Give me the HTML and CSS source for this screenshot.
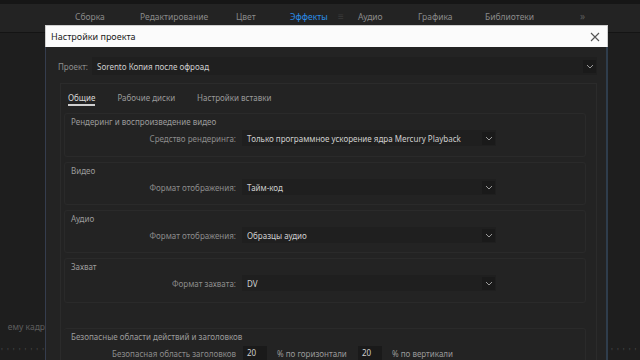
FILE: index.html
```html
<!DOCTYPE html>
<html lang="ru">
<head>
<meta charset="utf-8">
<link rel="stylesheet" href="styles.css">
</head>
<body>
<div class="app">
  <header class="topbar">
    <nav class="ws-tabs">
      <span class="ws">Сборка</span>
      <span class="ws">Редактирование</span>
      <span class="ws">Цвет</span>
      <span class="ws active">Эффекты</span>
      <span class="ws menu">≡</span>
      <span class="ws">Аудио</span>
      <span class="ws">Графика</span>
      <span class="ws">Библиотеки</span>
      <span class="ws more">»</span>
    </nav>
  </header>
  <main class="workspace">
    <div class="bg-left">
      <span class="bg-text">ему кадр</span>
      <span class="bg-ticks">' ' ' ' ' ' ' '</span>
    </div>
    <div class="bg-right">
      <span class="bg-ticks">' ' ' ' '</span>
    </div>
  </main>

  <section class="dialog">
    <div class="titlebar">
      <span class="title">Настройки проекта</span>
      <svg class="close" width="10" height="10" viewBox="0 0 10 10"><path d="M1 1L9 9M9 1L1 9" stroke="#555" stroke-width="1.1"/></svg>
    </div>
    <div class="dialog-body">
      <div class="project-row">
        <span class="lbl">Проект:</span>
        <div class="select wide"><span>Sorento Копия после офроад</span><span class="chev"><svg width="8" height="5" viewBox="0 0 8 5"><path d="M1 1L4 4L7 1" stroke="#9a9a9a" fill="none" stroke-width="1"/></svg></span></div>
      </div>
      <div class="panel">
        <div class="tabs">
          <span class="tab on">Общие</span>
          <span class="tab">Рабочие диски</span>
          <span class="tab">Настройки вставки</span>
        </div>
        <div class="group g1">
          <div class="gtitle">Рендеринг и воспроизведение видео</div>
          <div class="row">
            <span class="rlbl">Средство рендеринга:</span>
            <div class="select"><span>Только программное ускорение ядра Mercury Playback</span><span class="chev"><svg width="8" height="5" viewBox="0 0 8 5"><path d="M1 1L4 4L7 1" stroke="#9a9a9a" fill="none" stroke-width="1"/></svg></span></div>
          </div>
        </div>
        <div class="group">
          <div class="gtitle">Видео</div>
          <div class="row">
            <span class="rlbl">Формат отображения:</span>
            <div class="select"><span>Тайм-код</span><span class="chev"><svg width="8" height="5" viewBox="0 0 8 5"><path d="M1 1L4 4L7 1" stroke="#9a9a9a" fill="none" stroke-width="1"/></svg></span></div>
          </div>
        </div>
        <div class="group">
          <div class="gtitle">Аудио</div>
          <div class="row">
            <span class="rlbl">Формат отображения:</span>
            <div class="select"><span>Образцы аудио</span><span class="chev"><svg width="8" height="5" viewBox="0 0 8 5"><path d="M1 1L4 4L7 1" stroke="#9a9a9a" fill="none" stroke-width="1"/></svg></span></div>
          </div>
        </div>
        <div class="group g4">
          <div class="gtitle">Захват</div>
          <div class="row">
            <span class="rlbl">Формат захвата:</span>
            <div class="select"><span>DV</span><span class="chev"><svg width="8" height="5" viewBox="0 0 8 5"><path d="M1 1L4 4L7 1" stroke="#9a9a9a" fill="none" stroke-width="1"/></svg></span></div>
          </div>
        </div>
        <div class="group g5">
          <div class="gtitle">Безопасные области действий и заголовков</div>
          <div class="row">
            <span class="rlbl">Безопасная область заголовков</span>
            <span class="num">20</span>
            <span class="unit">% по горизонтали</span>
            <span class="num">20</span>
            <span class="unit">% по вертикали</span>
          </div>
        </div>
      </div>
    </div>
  </section>
</div>
</body>
</html>
```

FILE: styles.css
```css
* { box-sizing: border-box; margin: 0; padding: 0; }
html, body { width: 640px; height: 360px; overflow: hidden; background: #1d1d1d; }
body { font-family: "Noto Sans", "Open Sans", sans-serif; font-size: 8px; color: #9b9b9b; }
.app { position: relative; width: 640px; height: 360px; display: flex; flex-direction: column; }

.topbar { height: 33px; flex-shrink: 0; background: #232323; border-top: 4px solid #161616; border-bottom: 1px solid #141414; }
.ws-tabs { display: flex; align-items: center; height: 24px; padding-left: 75px; }
.ws { color: #8a8a8a; font-size: 8.5px; }
.ws:nth-child(1) { width: 65px; }
.ws:nth-child(2) { width: 96px; }
.ws:nth-child(3) { width: 54px; }
.ws:nth-child(4) { width: 48px; }
.ws.active { color: #2b8ee8; }
.ws.menu { width: 20px; color: #3a3a3a; font-size: 10px; }
.ws:nth-child(6) { width: 60px; }
.ws:nth-child(7) { width: 67px; }
.ws:nth-child(8) { width: 95px; }
.ws.more { color: #5a5a5a; font-size: 10px; }

.workspace { flex: 1; display: flex; justify-content: space-between; background: #1e1e1e; }
.bg-left { width: 45px; display: flex; flex-direction: column; justify-content: flex-end; align-items: flex-end; padding-bottom: 3px; gap: 14px; overflow: hidden; }
.bg-text { white-space: nowrap; color: #5e5e5e; font-size: 8.5px; }
.bg-ticks { color: #4a4a4a; font-size: 8px; white-space: nowrap; letter-spacing: 1px; }
.bg-right { width: 33px; display: flex; align-items: flex-end; padding-bottom: 3px; padding-left: 4px; }

.dialog { position: absolute; left: 45px; top: 25px; width: 563px; height: 335px; display: flex; flex-direction: column; }
.titlebar { height: 22px; flex-shrink: 0; background: #fbfbfb; display: flex; align-items: center; justify-content: space-between; padding: 0 6px 0 5px; border: 1px solid #cfcfcf; border-bottom: none; }
.title { color: #1a1a1a; font-size: 9px; }
.close { margin-right: 1px; }
.dialog-body { flex: 1; min-height: 0; overflow: hidden; background: #232323; border-left: 1px solid #353d4e; border-right: 2px solid #2f3d4c; padding: 10px 9px 0 12px; }

.project-row { display: flex; align-items: center; height: 18px; }
.lbl { width: 34px; color: #8e8e8e; }
.select { display: flex; align-items: center; justify-content: space-between; background: #1f1f1f; height: 16px; padding-left: 5px; color: #cfcfcf; }
.select.wide { flex: 1; height: 18px; }
.chev { display: flex; align-items: center; justify-content: center; width: 13px; height: 13px; background: #1a1a1a; margin-right: 1px; }

.panel { margin: 8px 0 0 2px; width: 537px; border: 1px solid #2b2b2b; border-bottom: none; height: 300px; padding: 0 10px 0 3px; }
.tabs { display: flex; height: 25px; align-items: center; padding-left: 4px; padding-top: 2px; }
.tab { color: #9a9a9a; margin-right: 22px; padding-bottom: 1px; border-bottom: 2px solid transparent; line-height: 10px; position: relative; top: 2px; }
.tab.on { color: #d8d8d8; border-bottom-color: #cfcfcf; }

.group { border: 1px solid #2a2a2a; border-radius: 3px; height: 43px; margin-bottom: 5px; padding: 2px 0 0 6px; }
.g1 { margin-top: 4px; height: 44px; }
.g4 { height: 45px; margin-bottom: 25px; }
.g5 { height: 40px; border-bottom: none; border-left: none; padding-left: 7px; }
.gtitle { color: #9c9c9c; height: 14px; line-height: 12px; }
.row { display: flex; align-items: center; height: 16px; }
.rlbl { width: 171px; text-align: right; color: #8c8c8c; padding-right: 6px; }
.row .select { width: 254px; }
.num { width: 24px; height: 14px; background: #1a1a1a; color: #d0d0d0; padding-left: 4px; line-height: 14px; margin-left: 1px; }
.unit { color: #9a9a9a; margin-left: 10px; width: 80px; }
```
